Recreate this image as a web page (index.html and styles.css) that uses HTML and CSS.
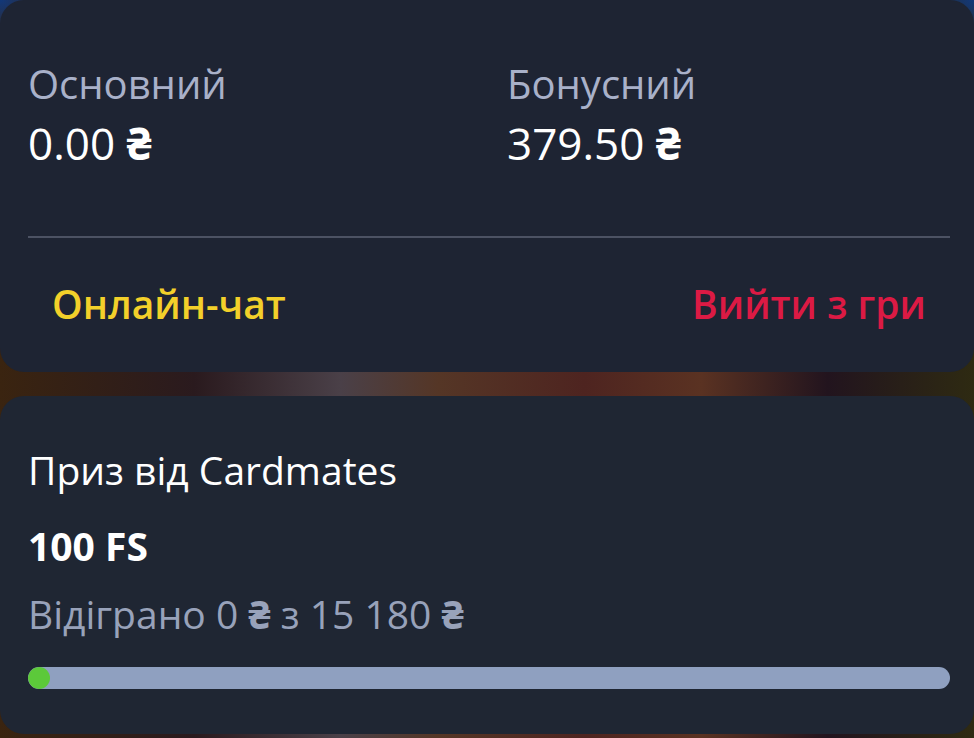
FILE: index.html
```html
<!DOCTYPE html>
<html lang="uk">
<head>
    <meta charset="UTF-8">
    <meta name="viewport" content="width=device-width, initial-scale=1.0">
    <title>Баланс</title>
    <link rel="stylesheet" href="styles.css">
</head>
<body>

<div class="card balance-card">
    <div class="balances">
        <div class="balance">
            <div class="balance-label">Основний</div>
            <div class="balance-value">0.00 <span class="uah">₴</span></div>
        </div>
        <div class="balance">
            <div class="balance-label">Бонусний</div>
            <div class="balance-value">379.50 <span class="uah">₴</span></div>
        </div>
    </div>
    <div class="divider"></div>
    <div class="actions">
        <a class="action chat" href="#">Онлайн-чат</a>
        <a class="action exit" href="#">Вийти з гри</a>
    </div>
</div>

<div class="card prize-card">
    <div class="prize-title">Приз від Cardmates</div>
    <div class="prize-amount">100 FS</div>
    <div class="prize-progress-text">Відіграно 0 <span class="uah">₴</span> з 15 180 <span class="uah">₴</span></div>
    <div class="progress">
        <div class="progress-fill" style="width: 22px"></div>
    </div>
</div>

</body>
</html>
```

FILE: styles.css
```css
body {
    font-family: "Open Sans", "Noto Sans", sans-serif;
    margin: 0;
    padding: 0;
    height: 738px;
    overflow: hidden;
    background-color: #1a1d28;
    background-image:
        radial-gradient(ellipse at 0% 0%, #12387a 0, transparent 60px),
        radial-gradient(ellipse at 100% 0%, #12387a 0, transparent 60px),
        linear-gradient(90deg, #3a2410 0%, #2a1a1e 20%, #4a4048 35%, #553626 45%, #4e2420 60%, #5a3222 72%, #22141e 85%, #2e2a12 100%);
}
.card {
    background-color: #1e2433;
    border-radius: 24px;
}
.balance-card {
    padding: 60px 24px 44px 28px;
}
.balances {
    display: grid;
    grid-template-columns: 1fr 1fr;
    column-gap: 36px;
}
.balance-label {
    color: #a9b1c9;
    font-size: 40px;
    line-height: 48px;
}
.balance-value {
    color: #fff;
    font-size: 44px;
    line-height: 52px;
    margin-top: 9px;
}
.uah {
    font-weight: 700;
}
.divider {
    height: 2px;
    background-color: #4c5263;
    margin-top: 67px;
}
.actions {
    display: flex;
    justify-content: space-between;
    padding: 42px 24px 0 24px;
}
.action {
    font-size: 39px;
    font-weight: 600;
    line-height: 48px;
    text-decoration: none;
}
.chat {
    color: #f3d02a;
}
.exit {
    color: #dc1a44;
}
.prize-card {
    margin-top: 24px;
    padding: 49px 24px 45px 28px;
    background-color: #1f2633;
}
.prize-title {
    color: #fff;
    font-size: 39px;
    line-height: 50px;
}
.prize-amount {
    color: #fff;
    font-size: 39px;
    font-weight: 700;
    line-height: 50px;
    margin-top: 26px;
}
.prize-progress-text {
    color: #98a2ba;
    font-size: 39px;
    line-height: 50px;
    margin-top: 18px;
}
.progress {
    height: 22px;
    border-radius: 11px;
    background-color: #8fa0c0;
    margin-top: 28px;
    overflow: hidden;
}
.progress-fill {
    height: 100%;
    border-radius: 11px;
    background-color: #5cc93a;
}
```
